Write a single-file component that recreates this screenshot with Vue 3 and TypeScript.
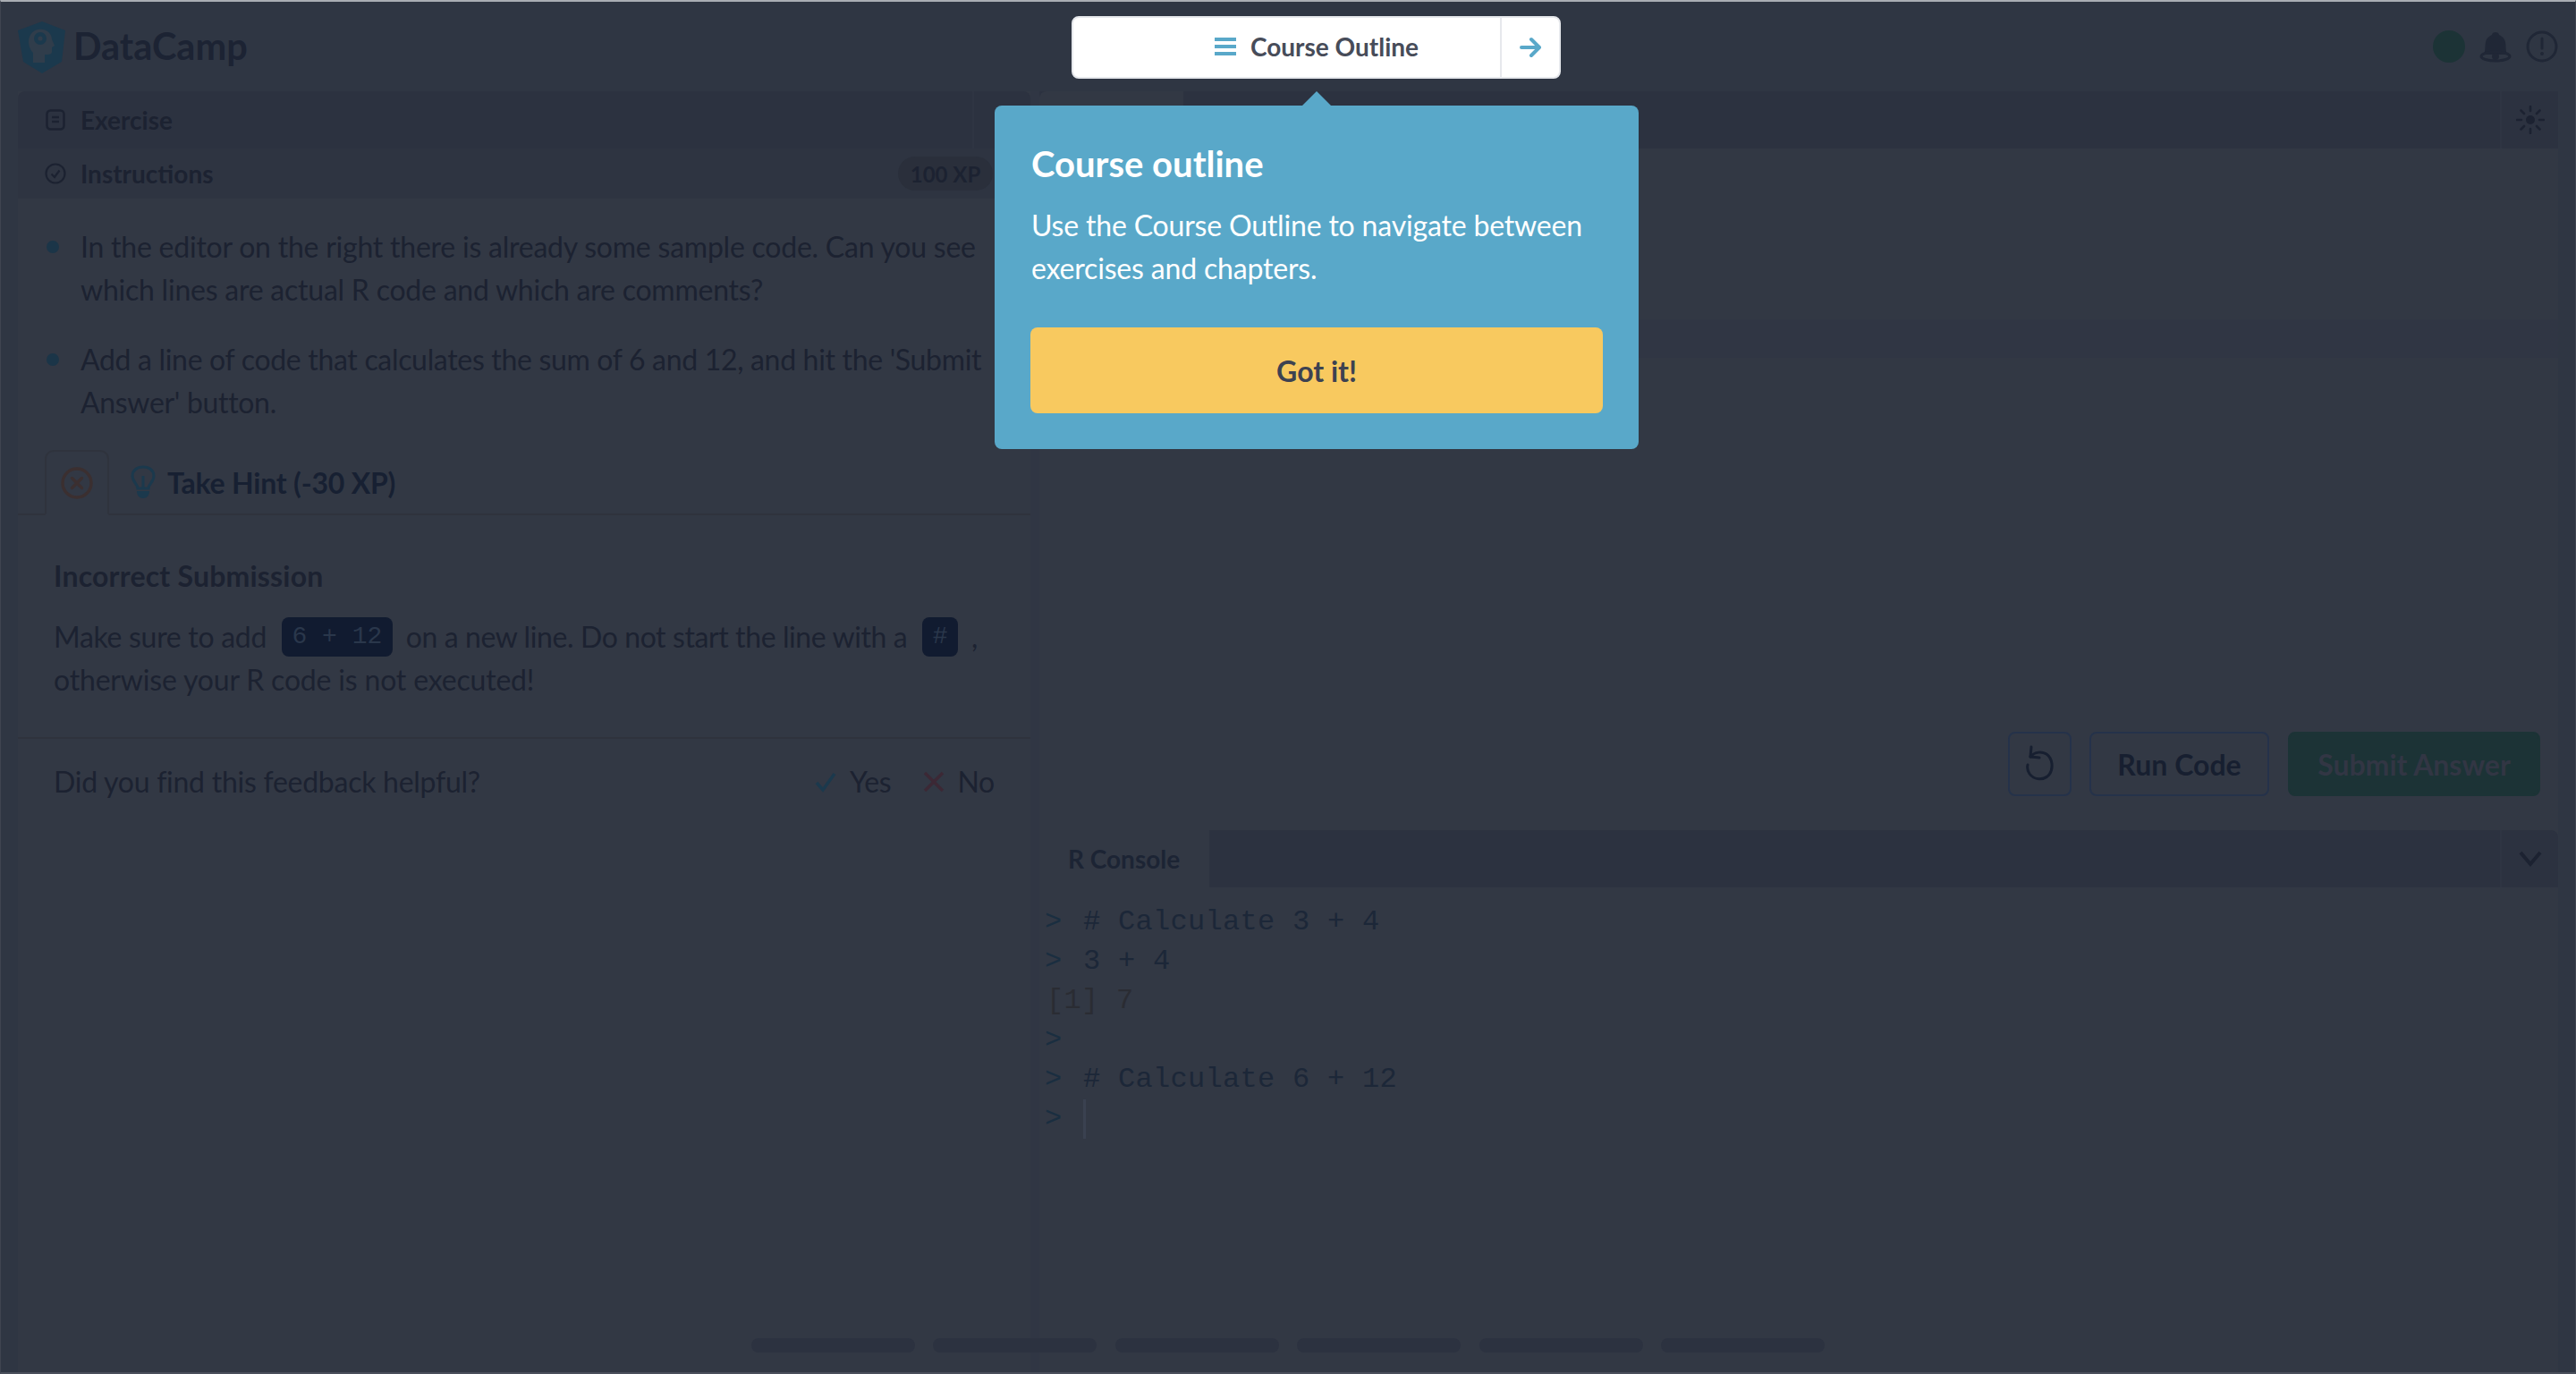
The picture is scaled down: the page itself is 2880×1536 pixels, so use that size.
<script setup lang="ts">
const consoleLines: { prompt: string; text: string; output?: boolean }[] = [
  { prompt: '>', text: '# Calculate 3 + 4' },
  { prompt: '>', text: '3 + 4' },
  { prompt: '', text: '[1] 7', output: true },
  { prompt: '>', text: '' },
  { prompt: '>', text: '# Calculate 6 + 12' },
]
const steps = [1, 2, 3, 4, 5, 6]
</script>

<template>
  <div class="page">
    <header class="topbar">
      <div class="brand">
        <svg class="logo" viewBox="0 0 54 58" width="54" height="58">
          <path d="M27 0 L53 10 L49 45 L27 58 L6 45 L0 10 Z" fill="#1b394d" />
          <path d="M17 46 L17 35 C12 30 11 22 13 17 C16 10 22 8 28 9 C34 10 38 15 38 20 L41 27 L38 29 L38 34 C38 36 36 37 33 37 L30 37 L30 46 Z" fill="#303d4b" />
          <circle cx="25" cy="19" r="7" fill="#1b394d" />
          <circle cx="25" cy="19" r="2.6" fill="#303d4b" />
        </svg>
        <span class="brand-name">DataCamp</span>
      </div>
      <div class="top-icons">
        <span class="status-dot"></span>
        <svg viewBox="0 0 36 36" width="36" height="36">
          <path d="M5 27 C7 22 6 18 7 13 C8 8 12 6 14 5 C14 1 22 1 22 5 C24 6 28 8 29 13 C30 18 29 22 31 27 Z" fill="#202736" />
          <ellipse cx="18" cy="29" rx="16" ry="5" fill="none" stroke="#202736" stroke-width="3" />
          <circle cx="18" cy="29" r="4" fill="#202736" />
        </svg>
        <svg viewBox="0 0 36 36" width="36" height="36">
          <circle cx="18" cy="18" r="16" fill="none" stroke="#202736" stroke-width="3" />
          <path d="M18 9 V20" stroke="#202736" stroke-width="3" stroke-linecap="round" />
          <circle cx="18" cy="26" r="2" fill="#202736" />
        </svg>
      </div>
    </header>

    <main class="workspace">
      <section class="left-pane">
        <div class="exercise-bar">
          <div class="bar-title">
            <svg viewBox="0 0 22 24" width="22" height="24">
              <rect x="1.5" y="1.5" width="19" height="21" rx="4" fill="none" stroke="#1c2231" stroke-width="2.5" />
              <path d="M7 9 H15 M7 14 H15" stroke="#1c2231" stroke-width="2.5" />
            </svg>
            <span>Exercise</span>
          </div>
          <div class="bar-end"></div>
        </div>
        <div class="instructions-bar">
          <div class="bar-title bar-title-wide">
            <svg viewBox="0 0 24 24" width="24" height="24">
              <circle cx="12" cy="12" r="10.5" fill="none" stroke="#1c2231" stroke-width="2.2" />
              <path d="M7.5 12.5 L11 16 L16.5 8.5" fill="none" stroke="#1c2231" stroke-width="2.2" />
            </svg>
            <span>Instructions</span>
          </div>
          <span class="xp">100 XP</span>
        </div>

        <ul class="task-list">
          <li>In the editor on the right there is already some sample code. Can you see which lines are actual R code and which are comments?</li>
          <li class="tight">Add a line of code that calculates the sum of 6 and 12, and hit the 'Submit Answer' button.</li>
        </ul>

        <div class="hint-row">
          <div class="hint-tab">
            <svg viewBox="0 0 36 36" width="36" height="36">
              <circle cx="18" cy="18" r="16" fill="none" stroke="#3b2f30" stroke-width="3.4" />
              <path d="M12.5 12.5 L23.5 23.5 M23.5 12.5 L12.5 23.5" stroke="#3b2f30" stroke-width="3.4" stroke-linecap="round" />
            </svg>
          </div>
          <svg class="bulb" viewBox="0 0 28 38" width="28" height="38">
            <path d="M8 26 C8 21 2 19 2 12 C2 6 7 2 14 2 C21 2 26 6 26 12 C26 19 20 21 20 26 Z" fill="none" stroke="#1b394d" stroke-width="3" />
            <path d="M14 12 V26" stroke="#1b394d" stroke-width="3" />
            <path d="M7 29 H21 C21 34 18 37 14 37 C10 37 7 34 7 29 Z" fill="#1b394d" />
          </svg>
          <span class="hint-label">Take Hint (-30 XP)</span>
        </div>

        <div class="feedback">
          <h3>Incorrect Submission</h3>
          <p>
            Make sure to add <code>6 + 12</code> <span class="seg-tight">on a new line. Do not start the line with a</span> <code>#</code> ,
            <span class="seg-loose">otherwise your R code is not executed!</span>
          </p>
        </div>

        <div class="helpful">
          <span>Did you find this feedback helpful?</span>
          <div class="votes">
            <span class="vote">
              <svg viewBox="0 0 26 26" width="26" height="26">
                <path d="M3 14 L10 22 L23 4" fill="none" stroke="#1b394d" stroke-width="3.5" />
              </svg>
              Yes
            </span>
            <span class="vote">
              <svg viewBox="0 0 24 26" width="24" height="26">
                <path d="M2 3 L22 23 M22 3 L2 23" fill="none" stroke="#3c2835" stroke-width="3.5" />
              </svg>
              No
            </span>
          </div>
        </div>
      </section>

      <div class="gutter"></div>

      <section class="right-pane">
        <div class="tab-bar">
          <div class="tab-active"></div>
          <div class="tab-fill"></div>
          <div class="tab-action">
            <svg viewBox="0 0 32 32" width="32" height="32">
              <circle cx="16" cy="16" r="5" fill="#1c2231" />
              <path d="M16 1 V6 M16 26 V31 M1 16 H6 M26 16 H31 M5.5 5.5 L9 9 M23 23 L26.5 26.5 M26.5 5.5 L23 9 M9 23 L5.5 26.5" stroke="#1c2231" stroke-width="2.6" stroke-linecap="round" />
            </svg>
          </div>
        </div>

        <div class="editor">
          <div class="line-highlight"></div>
        </div>

        <div class="actions">
          <button class="btn btn-icon">
            <svg viewBox="0 0 32 44" width="32" height="44">
              <path d="M6 3 L5 14 L15 15" fill="none" stroke="#171f30" stroke-width="3" stroke-linecap="round" stroke-linejoin="round" />
              <path d="M5 14 C10 8 18 8 23 11 C30 16 31 27 26 34 C20 41 9 40 4 33 C2 30 1 27 2 23" fill="none" stroke="#171f30" stroke-width="3" stroke-linecap="round" />
            </svg>
          </button>
          <button class="btn btn-run">Run Code</button>
          <button class="btn btn-submit">Submit Answer</button>
        </div>

        <div class="console-bar">
          <div class="console-tab">R Console</div>
          <div class="tab-fill"></div>
          <div class="tab-action">
            <svg viewBox="0 0 26 20" width="26" height="20">
              <path d="M2 3 L13 16 L24 3" fill="none" stroke="#1c2231" stroke-width="4" />
            </svg>
          </div>
        </div>

        <div class="console">
          <div v-for="(line, i) in consoleLines" :key="i" class="console-line">
            <template v-if="line.output"><span class="output">{{ line.text }}</span></template>
            <template v-else>
              <span class="prompt">{{ line.prompt }}</span>
              <span class="command">{{ line.text }}</span>
            </template>
          </div>
          <div class="console-line">
            <span class="prompt">&gt;</span>
            <span class="cursor"></span>
          </div>
        </div>
      </section>
    </main>

    <footer class="progress">
      <span v-for="s in steps" :key="s" class="step"></span>
    </footer>

    <div class="outline-btn">
      <div class="outline-main">
        <svg viewBox="0 0 24 20" width="24" height="20">
          <path d="M0 2 H24 M0 10 H24 M0 18 H24" stroke="#59a8c9" stroke-width="4" />
        </svg>
        <span>Course Outline</span>
      </div>
      <div class="outline-next">
        <svg viewBox="0 0 24 24" width="24" height="24">
          <path d="M2 12 H21 M13 3 L22 12 L13 21" fill="none" stroke="#59a8c9" stroke-width="4" stroke-linecap="round" stroke-linejoin="round" />
        </svg>
      </div>
    </div>

    <div class="popover">
      <h2>Course outline</h2>
      <p>Use the Course Outline to navigate between exercises and chapters.</p>
      <button class="got-it">Got it!</button>
    </div>
  </div>
</template>

<style>
html, body { margin: 0; background: #2f3643; }
</style>

<style scoped>
.page {
  position: relative;
  width: 2880px;
  height: 1536px;
  box-sizing: border-box;
  overflow: hidden;
  display: flex;
  flex-direction: column;
  background: #2f3643;
  border-top: 2px solid #a9adb3;
  border-bottom: 2px solid #4a4f5b;
  border-left: 1px solid #3f4450;
  border-right: 1px solid #3f4450;
  font-family: Lato, "Liberation Sans", sans-serif;
  color: #1c2231;
}
.topbar {
  height: 100px;
  flex: none;
  display: flex;
  justify-content: space-between;
  align-items: center;
  padding: 0 20px 0 19px;
}
.brand { display: flex; align-items: center; gap: 8px; margin-top: 1px; }
.brand-name { font-size: 41.5px; font-weight: 700; color: #1c2333; margin-top: -4px; }
.top-icons { display: flex; align-items: center; gap: 16px; margin-right: -1px; }
.status-dot { width: 36px; height: 36px; border-radius: 50%; background: #1c3336; }

.workspace { flex: 1; display: flex; padding: 0 19px; min-height: 0; }
.left-pane { width: 1132px; flex: none; background: #323844; display: flex; flex-direction: column; }
.gutter { width: 10px; flex: none; background: #303644; }
.right-pane { flex: 1; display: flex; flex-direction: column; background: #323844; }

.exercise-bar { height: 64px; flex: none; display: flex; background: #2c3240; border-radius: 8px 8px 0 0; }
.bar-title { display: flex; align-items: center; gap: 17px; padding-left: 31px; font-size: 28px; font-weight: 700; color: #1c2231; }
.bar-title-wide { gap: 16px; padding-left: 30px; }
.bar-end { margin-left: auto; width: 63px; border-left: 2px solid #2f3543; }
.instructions-bar {
  height: 56px; flex: none; display: flex; justify-content: space-between; align-items: center;
  background: #2e3441; padding-right: 42px;
}
.xp {
  width: 106px; height: 38px; border-radius: 19px; background: #2a2f3b; display: flex;
  align-items: center; justify-content: center; font-size: 24px; font-weight: 700; color: #1c2231;
}

.task-list { list-style: none; margin: 30px 0 0; padding: 0 30px 0 70px; font-size: 32px; line-height: 48px; letter-spacing: -0.23px; color: #1c2231; }
.task-list li { position: relative; margin-bottom: 30px; }
.task-list li.tight { letter-spacing: -0.32px; }
.task-list li::before {
  content: ""; position: absolute; left: -38px; top: 17px; width: 14px; height: 14px;
  border-radius: 50%; background: #1b3548;
}

.hint-row { display: flex; align-items: center; height: 71px; margin-top: -1px; border-bottom: 2px solid #2f333d; flex: none; }
.hint-tab {
  width: 72px; height: 73px; margin: 0 0 -2px 30px; box-sizing: border-box; display: flex; align-items: center; justify-content: center;
  border: 2px solid #2f333d; border-bottom: 2px solid #323844; border-radius: 10px 10px 0 0;
}
.bulb { margin-left: 24px; }
.hint-label { margin: 2px 0 0 13px; font-size: 32px; font-weight: 700; letter-spacing: -0.2px; color: #172032; }

.feedback { padding: 44px 40px 0; height: 250px; box-sizing: border-box; border-bottom: 2px solid #2f333d; flex: none; }
.feedback h3 { margin: 0; font-size: 32px; line-height: 48px; font-weight: 700; letter-spacing: 0.2px; color: #1c2231; }
.feedback p { margin: 20px 0 0; font-size: 32px; line-height: 48px; letter-spacing: -0.3px; color: #1c2231; }
.seg-tight { letter-spacing: -0.4px; }
.seg-loose { letter-spacing: -0.18px; }
code {
  display: inline-block; font-family: "Liberation Mono", monospace; font-size: 28px; line-height: 44px; height: 44px; letter-spacing: 0;
  padding: 0 11.5px; margin: 2px 7px 0 9px; border-radius: 8px; background: #111b30; color: #2a374b; vertical-align: top;
}
.helpful { display: flex; justify-content: space-between; align-items: center; padding: 24px 40px 0; font-size: 32px; line-height: 48px; letter-spacing: -0.26px; color: #1c2231; }
.votes { display: flex; gap: 36px; }
.vote { display: inline-flex; align-items: center; gap: 14px; }

.tab-bar { height: 64px; flex: none; display: flex; background: #2c3240; }
.tab-active { width: 161px; background: #323844; border-radius: 8px 0 0 0; }
.tab-fill { flex: 1; }
.tab-action { width: 63px; border-left: 2px solid #2f3543; display: flex; align-items: center; justify-content: center; }
.editor { flex: 1; position: relative; }
.line-highlight { position: absolute; left: 0; right: 0; top: 191px; height: 43px; background: #303644; }
.actions { display: flex; justify-content: flex-end; gap: 21px; height: 72px; padding: 0 20px 38px 0; flex: none; }
.btn {
  height: 72px; border-radius: 8px; box-sizing: border-box; font-family: inherit; font-size: 32px; font-weight: 700;
  display: flex; align-items: center; justify-content: center; padding: 0; background: transparent;
  border: 2px solid #25324a; color: #171f30;
}
.btn-icon { width: 71px; margin-right: -1px; }
.btn-run { width: 201px; }
.btn-submit { width: 282px; background: #1c3336; border-color: #1c3336; color: #323644; }

.console-bar { height: 64px; flex: none; display: flex; background: #2c3240; border-radius: 8px 8px 0 0; }
.console-tab {
  width: 190px; box-sizing: border-box; background: #323844; display: flex; align-items: center; padding-left: 32px;
  font-size: 28px; font-weight: 700; color: #1c2434;
}
.console {
  height: 542px; box-sizing: border-box; padding: 17px 0 0 6px; flex: none;
  font-family: "Liberation Mono", monospace; font-size: 32px; line-height: 44px; letter-spacing: 0.3px; color: #1c2738;
}
.console-line { height: 44px; display: flex; align-items: center; }
.prompt { color: #1a2e40; width: 43px; flex: none; }
.command { white-space: pre; }
.output { color: #2a2c33; margin-left: 2px; white-space: pre; }
.cursor { width: 3px; height: 44px; background: #3a4150; }

.progress { position: absolute; left: 839px; top: 1494px; display: flex; gap: 20.4px; }
.step { width: 183px; height: 16px; border-radius: 8px; background: #2c3240; }

.outline-btn {
  position: absolute; left: 1197px; top: 16px; width: 547px; height: 70px; box-sizing: border-box;
  background: #fff; border: 2px solid #e6e8ec; border-radius: 8px; display: flex;
}
.outline-main {
  flex: 1; display: flex; align-items: center; gap: 16px; padding-left: 158px; padding-bottom: 2px; font-size: 28px; font-weight: 700; color: #474c59;
}
.outline-next { width: 64px; border-left: 2px solid #e6e8ec; display: flex; align-items: center; justify-content: center; }

.popover {
  position: absolute; left: 1111px; top: 116px; width: 720px; height: 384px; box-sizing: border-box; padding: 38px 40px 0 41px;
  background: #59a8c9; border-radius: 8px; color: #fff;
}
.popover::before {
  content: ""; position: absolute; left: 344px; top: -16px; width: 32px; height: 16px;
  background: #59a8c9; clip-path: polygon(50% 0, 100% 100%, 0 100%);
}
.popover h2 { margin: 0; font-size: 40px; line-height: 54px; font-weight: 700; }
.popover p { margin: 18px 0 0; font-size: 32px; line-height: 48px; letter-spacing: -0.18px; }
.got-it {
  display: block; width: 640px; height: 96px; margin: 42px 0 0 -1px; border: none; border-radius: 8px; background: #f8c95f;
  font-family: inherit; font-size: 32px; font-weight: 700; color: #3d4251;
}
</style>
